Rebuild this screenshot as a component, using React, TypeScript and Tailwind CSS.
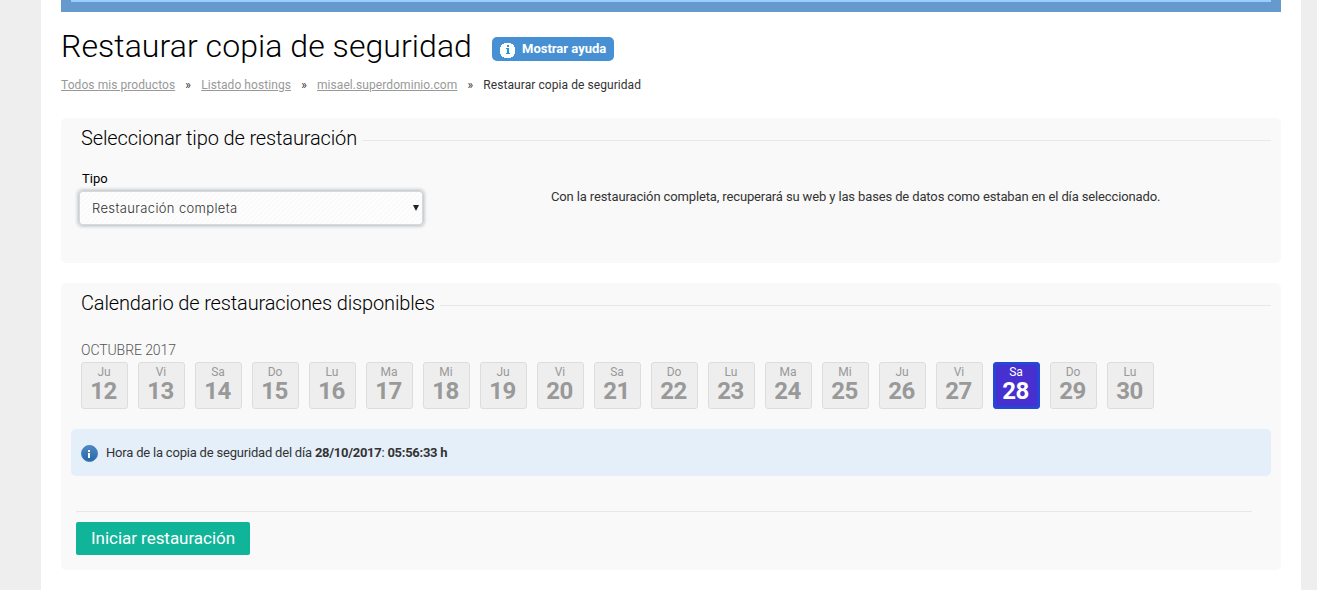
const DAYS: [string, number][] = [
  ['Ju', 12], ['Vi', 13], ['Sa', 14], ['Do', 15], ['Lu', 16], ['Ma', 17], ['Mi', 18],
  ['Ju', 19], ['Vi', 20], ['Sa', 21], ['Do', 22], ['Lu', 23], ['Ma', 24], ['Mi', 25],
  ['Ju', 26], ['Vi', 27], ['Sa', 28], ['Do', 29], ['Lu', 30],
];

const SELECTED_DAY = 28;

function SectionTitle({ children }: { children: string }) {
  return (
    <div className="flex h-10 items-center pl-5 pr-[10px]">
      <h2 className="shrink-0 text-[20px] font-light leading-10 tracking-[-0.135px] text-black">{children}</h2>
      <div className="ml-[5px] mt-[5px] h-px grow bg-[#e8e8e8]" />
    </div>
  );
}

function HelpIcon() {
  return (
    <svg width="16" height="16" viewBox="0 0 16 16" className="mt-[3px] shrink-0" shapeRendering="crispEdges">
      <path d="M4 1h7v1h2v1h1v2h1v7h-1v2h-1v1h-2v1H4v-1H2v-1H1v-2H0V5h1V3h1V2h2z" fill="#fff" />
      <path d="M7 3h2v2H7zM6 6h3v5h1v1H6v-1h1V7H6z" fill="#1b9bd3" />
    </svg>
  );
}

function InfoIcon() {
  return (
    <svg width="17" height="17" viewBox="0 0 17 17" className="mt-[2px] shrink-0">
      <defs>
        <linearGradient id="info" x1="0" y1="0" x2="0" y2="1">
          <stop offset="0" stopColor="#5287c5" />
          <stop offset="1" stopColor="#226aa5" />
        </linearGradient>
      </defs>
      <circle cx="8.5" cy="8.5" r="8" fill="url(#info)" stroke="#4680bf" />
      <path d="M7 5h2v2H7zM7 8h2v5H7z" fill="#fff" />
    </svg>
  );
}

function Crumb({ children }: { children: string }) {
  return (
    <>
      <a href="#" className="text-[#999] underline">{children}</a>
      <span className="w-[26px] text-center">»</span>
    </>
  );
}

export default function App() {
  return (
    <div className="h-[590px] w-[1317px] overflow-hidden bg-[#eee] pl-[41px] pr-4 font-['Roboto',sans-serif] text-[#333] antialiased">
      <div className="h-full bg-white px-5">
        <div className="h-3 bg-[#6699cc] px-[10px]">
          <div className="h-[2px] bg-[#99ccff]" />
        </div>

        <div className="flex h-[60px] items-start pt-[13px]">
          <h1 className="w-[431px] whitespace-nowrap text-[32px] font-light leading-[42px] tracking-[0.06px] text-black">
            Restaurar copia de seguridad
          </h1>
          <button className="mt-3 flex h-6 w-[122px] items-start gap-[6px] whitespace-nowrap rounded-[5px] bg-[#4690d3] pl-2 pt-[2px] text-[13px] font-bold leading-5 text-white">
            <HelpIcon />
            <span>Mostrar ayuda</span>
          </button>
        </div>

        <nav className="flex h-[46px] whitespace-nowrap pt-[3px] text-[12px] leading-5 tracking-[0.07px]">
          <Crumb>Todos mis productos</Crumb>
          <Crumb>Listado hostings</Crumb>
          <Crumb>misael.superdominio.com</Crumb>
          <span>Restaurar copia de seguridad</span>
        </nav>

        <section className="h-[145px] rounded-[5px] bg-[#f9f9f9]">
          <SectionTitle>Seleccionar tipo de restauración</SectionTitle>
          <div className="flex">
            <div className="w-[490px] pl-[18px] pt-[11px]">
              <div className="pl-[3px] text-[13px] leading-5 text-black">Tipo</div>
              <div className="mt-px flex h-9 w-[346px] items-center justify-between rounded-[5px] border border-[#d0d0d0] bg-[repeating-linear-gradient(135deg,#fff_0px,#fff_1px,#fafafa_2px,#fafafa_3.54px)] pl-3 pr-1 shadow-[inset_0_0_0_1px_#d9d9d9,0_0_0_1px_#dcdedf,0_0_0_2px_#e6ebef,0_0_1px_3px_#edf3f8] [margin-left:-1px]">
                <span className="pl-px font-['Inter',sans-serif] text-[13px] font-light leading-5 tracking-[0.36px] text-[#333]">Restauración completa</span>
                <svg width="6" height="6" viewBox="0 0 6 6"><path d="M0 0h6L3 6z" fill="#222" /></svg>
              </div>
            </div>
            <p className="pt-[29px] text-[13px] leading-5 tracking-[-0.13px]">
              Con la restauración completa, recuperará su web y las bases de datos como estaban en el día seleccionado.
            </p>
          </div>
        </section>

        <section className="mt-5 h-[287px] rounded-[5px] bg-[#f9f9f9]">
          <SectionTitle>Calendario de restauraciones disponibles</SectionTitle>
          <div className="px-5 pt-[17px]">
            <div className="h-[22px] text-[14px] font-light leading-5 tracking-[-0.08px] text-[#555]">OCTUBRE 2017</div>
            <div className="flex gap-[10px]">
              {DAYS.map(([name, day]) => (
                <div
                  key={day}
                  className={
                    'flex h-[47px] w-[47px] flex-col items-center rounded-[3px] border ' +
                    (day === SELECTED_DAY
                      ? 'border-[#2549d5] bg-[#472fd0] text-white shadow-[inset_0_0_2px_2px_#2549d5]'
                      : 'border-[#ddd] bg-[#eee] text-[#999]')
                  }
                >
                  <span className="h-4 pr-px text-[12px] leading-[18px]">{name}</span>
                  <span className="pr-[2px] text-[24px] font-bold leading-[25px] tracking-[-0.6px]">{day}</span>
                </div>
              ))}
            </div>
          </div>

          <div className="mx-[10px] mt-5 flex h-[47px] items-start gap-2 rounded-[5px] bg-[#e5effa] pl-[10px] pt-[14px] text-[13px] leading-5 tracking-[-0.2px]">
            <InfoIcon />
            <p>
              Hora de la copia de seguridad del día <b className="tracking-[-0.28px]">28/10/2017</b>: <b className="tracking-[-0.28px]">05:56:33 h</b>
            </p>
          </div>

          <div className="ml-[15px] mr-[29px] mt-[35px] h-px bg-[#e8e8e8]" />
          <button className="ml-[15px] mt-[10px] h-[33px] w-[174px] whitespace-nowrap rounded-[2px] bg-[#10b498] text-[17px] leading-[33px] tracking-[-0.04px] text-white">
            Iniciar restauración
          </button>
        </section>
      </div>
    </div>
  );
}
